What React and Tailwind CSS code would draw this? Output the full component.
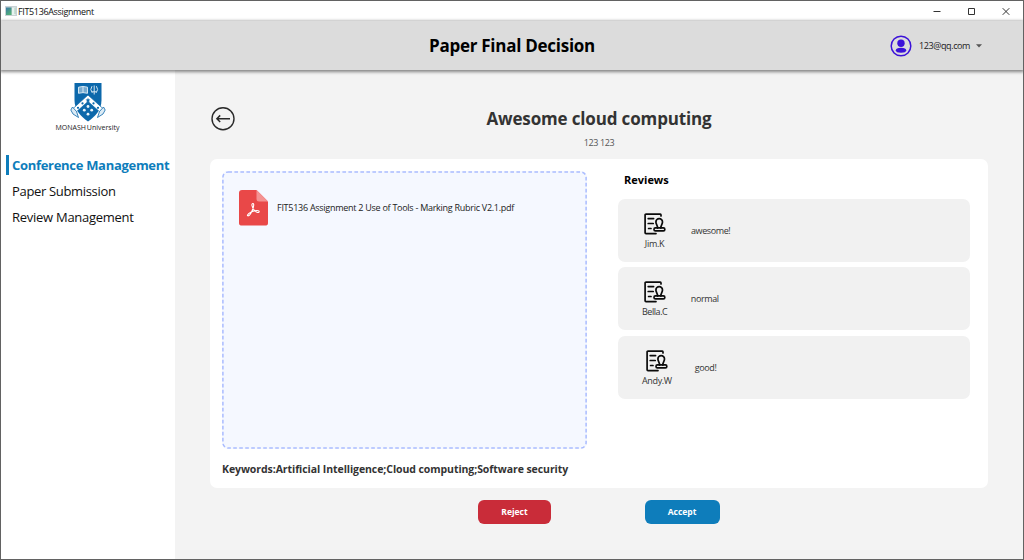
import React from "react";

function Crest() {
  return (
    <svg width="36" height="39" viewBox="0 0 36 39">
      <path d="M4.5 0H31.5V17C31.5 27 25.5 33 18 38.5C10.5 33 4.5 27 4.5 17Z" fill="#0c68ab" />
      <path d="M18 12L34 26.5L31 30L18 18.5L5 30L2 26.5Z" fill="#fff" stroke="#0c68ab" strokeWidth="0.7" />
      <path d="M2.5 24L0.8 27L3 31L8.5 34.5L6.5 28.5ZM33.5 24L35.2 27L33 31L27.5 34.5L29.5 28.5Z" fill="#dcebf5" stroke="#0c68ab" strokeWidth="0.8" />
      <path d="M8.5 4.2L13 3.4L17.5 4.2V10.3L13 9.6L8.5 10.3ZM13 3.6V9.7" fill="#79acd0" stroke="#e3f0f8" strokeWidth="0.9" />
      <path d="M22 3.2Q19.5 6.5 22.2 9.8M26.4 3.2Q28.9 6.5 26.2 9.8M24.2 2.5V11.5M22 8.8H26.4" fill="none" stroke="#d2e5f1" strokeWidth="1" />
      <path d="M18 14.8L18.7 16.4L20.4 16.6L19.1 17.8L19.5 19.4L18 18.5L16.5 19.4L16.9 17.8L15.6 16.6L17.3 16.4Z" fill="#0c68ab" />
      <g fill="#0c68ab"><circle cx="12.5" cy="20.4" r="1.1" /><circle cx="23.5" cy="20.4" r="1.1" /><circle cx="8" cy="24.8" r="1.1" /><circle cx="28" cy="24.8" r="1.1" /></g>
      <g fill="#eaf4fa"><circle cx="18" cy="23.5" r="1.4" /><circle cx="14.3" cy="27.2" r="1.4" /><circle cx="21.7" cy="27.2" r="1.4" /><circle cx="18" cy="31.2" r="1.4" /></g>
    </svg>
  );
}

function ReviewIcon() {
  return (
    <svg className="shrink-0" width="22" height="22" viewBox="0 0 22 22" fill="none" stroke="#0b0b0b" strokeWidth="1.7" strokeLinecap="round" strokeLinejoin="round">
      <path d="M17 3V1.9Q17 1.2 16.3 1.2H2Q1.1 1.2 1.1 2.1V19.7Q1.1 20.6 2 20.6H12" />
      <path d="M4.2 5.6H9.6M4.2 10.5H9.2M4.6 15.5H7" />
      <path d="M13.6 15.2C13.9 12.6 11.9 11.3 11.9 8.9A3.3 3.3 0 0 1 18.5 8.9C18.5 11.3 16.5 12.6 16.8 15.2" />
      <rect x="10" y="14.8" width="10.8" height="3" rx="1.4" />
    </svg>
  );
}

function Review({ name, text, nameClass, textClass, inset }) {
  return (
    <div className={`flex h-[63px] items-start rounded-[7px] bg-[#f1f1f1] ${inset}`}>
      <div className="flex flex-col items-center pt-[14px]">
        <ReviewIcon />
        <span className={`mt-[1px] h-[16px] text-[9px] leading-[16px] text-[#333] ${nameClass}`}>{name}</span>
      </div>
      <span className={`pt-[24px] text-[9px] leading-[16px] tracking-[-0.4px] text-[#333] ${textClass}`}>{text}</span>
    </div>
  );
}

export default function App() {
  return (
    <div className="flex h-[560px] w-[1024px] flex-col overflow-hidden whitespace-nowrap border border-[#626262] bg-[#f3f3f3] font-['Open_Sans','Noto_Sans',sans-serif] text-[#333]">
      <div className="flex h-[20px] shrink-0 items-center bg-white pl-[4px]">
        <svg width="12" height="10" viewBox="0 0 12 10">
          <defs><linearGradient id="app" x2="0.6" y2="1"><stop stopColor="#3979a5" /><stop offset="1" stopColor="#52b078" /></linearGradient></defs>
          <rect width="12" height="10" fill="#c9d2d5" />
          <rect x="1" y="1.5" width="5.5" height="7.5" fill="url(#app)" />
          <rect x="7" y="1.5" width="3.5" height="7.5" fill="#e8f3f0" />
          <rect x="9.5" y="2" width="1" height="6" fill="#a8cdbb" />
        </svg>
        <span className="ml-[1px] pt-[1px] text-[9px] leading-[18px] tracking-[-0.35px] text-[#111]">FIT5136Assignment</span>
        <svg className="ml-auto mr-[12px]" width="78" height="9" viewBox="0 0 78 9" fill="none" stroke="#333" strokeWidth="1">
          <path d="M0.5 4.5H7.5M35.5 1.5H41.5V7.5H35.5ZM69.7 1.2L76.3 7.8M76.3 1.2L69.7 7.8" />
        </svg>
      </div>
      <header className="z-10 grid h-[49px] shrink-0 grid-cols-[1fr_auto_1fr] items-center bg-[#dcdcdc] shadow-[0_1px_3px_1px_rgba(0,0,0,0.45)]">
        <span />
        <h1 className="text-[17px] font-bold leading-[24px] tracking-[-0.27px] text-black">Paper Final Decision</h1>
        <div className="flex items-center justify-end pr-[41px]">
          <svg width="22" height="22" viewBox="0 0 22 22">
            <circle cx="11" cy="11" r="9.8" fill="none" stroke="#3c12d9" strokeWidth="1.5" />
            <circle cx="11" cy="8.2" r="3.7" fill="#3c12d9" />
            <ellipse cx="11" cy="15.2" rx="5.2" ry="2.5" fill="#3c12d9" />
          </svg>
          <span className="ml-[7px] text-[9px] leading-[16px] tracking-[-0.4px] text-[#222]">123@qq.com</span>
          <svg className="ml-[6px]" width="6" height="4" viewBox="0 0 6 4"><path d="M0 0.3H6L3 3.5Z" fill="#555" /></svg>
        </div>
      </header>
      <div className="flex min-h-0 flex-1">
        <aside className="w-[174px] shrink-0 bg-white">
          <div className="flex flex-col items-center pt-[13px] pr-[1px]">
            <Crest />
            <div className="h-[12px] text-[7px] leading-[12px] text-[#222]"><span className="font-medium">MONASH</span> <span className="-ml-[1px]">University</span></div>
          </div>
          <nav className="mt-[21px] flex flex-col text-[13px] leading-[20px] text-[#111]">
            <a className="ml-[5px] h-[20px] border-l-[3px] border-[#0e7dbb] pl-[3px] font-bold tracking-[-0.3px] text-[#0e7dbb]">Conference Management</a>
            <a className="mt-[6px] h-[20px] pl-[11px] tracking-[-0.33px]">Paper Submission</a>
            <a className="mt-[6px] h-[20px] pl-[11px] tracking-[-0.27px]">Review Management</a>
          </nav>
        </aside>
        <main className="flex flex-1 flex-col pl-[35px] pr-[35px]">
          <div className="flex h-[89px] shrink-0">
            <svg className="mt-[37px] shrink-0" width="25" height="24" viewBox="0 0 25 24" fill="none" stroke="#292929" strokeWidth="1.4">
              <circle cx="13" cy="11.7" r="11" />
              <path d="M20 11.7H7M10.2 8.4L6.9 11.7L10.2 15" strokeWidth="1.5" />
            </svg>
            <div className="flex flex-1 flex-col items-center pt-[36px] pr-[25px]">
              <h2 className="text-[17px] font-bold leading-[26px] tracking-[-0.15px]">Awesome cloud computing</h2>
              <span className="mt-[3px] text-[9px] leading-[16px] tracking-[-0.4px] text-[#555]">123 123</span>
            </div>
          </div>
          <section className="flex h-[329px] w-[778px] shrink-0 rounded-[7px] bg-white">
            <div className="pl-[12px] pt-[12px]">
              <div className="relative h-[278px] w-[365px] rounded-[6px] bg-[#f5f8ff]">
                <svg className="absolute inset-0" width="365" height="278"><rect x="0.9" y="0.9" width="363.2" height="276.2" rx="5.5" fill="none" stroke="#aabcff" strokeWidth="1.5" strokeDasharray="3.6 2.4" /></svg>
                <div className="flex items-start pl-[17px] pt-[19px]">
                  <svg width="29" height="36" viewBox="0 0 29 36">
                    <path d="M3 0H17.5L29 11.5V33Q29 35.6 26 35.6H3Q0 35.6 0 33V3Q0 0 3 0Z" fill="#e94848" />
                    <path d="M17.5 0L29 11.5H20Q17.5 11.5 17.5 9Z" fill="#f49291" />
                    <path d="M14 13.5C12 13.3 13 17.5 15.2 20.2C17.5 22.8 20.2 23.2 20.2 21.5C20.2 19.8 14.7 20.6 11.8 22.2C8 24.3 7.8 26.2 9.5 25.8C11.9 25.2 16.5 13.7 14 13.5Z" fill="none" stroke="#fff" strokeWidth="1.1" />
                  </svg>
                  <span className="ml-[9px] mt-[10px] text-[9px] leading-[16px] tracking-[-0.27px] text-[#222]">FIT5136 Assignment 2 Use of Tools - Marking Rubric V2.1.pdf</span>
                </div>
              </div>
              <p className="mt-[10px] text-[10.5px] font-bold leading-[20px] tracking-[-0.07px]">Keywords:Artificial Intelligence;Cloud computing;Software security</p>
            </div>
            <div className="ml-[31px] w-[352px]">
              <h3 className="ml-[6px] mt-[11px] h-[28.5px] text-[11px] font-bold leading-[20px] text-black">Reviews</h3>
              <div className="flex flex-col gap-[5.7px]">
                <Review name="Jim.K" text="awesome!" inset="pl-[25.5px]" nameClass="tracking-[-0.3px]" textClass="ml-[25.5px]" />
                <Review name="Bella.C" text="normal" inset="pl-[24px]" nameClass="tracking-[-0.45px]" textClass="ml-[23.5px]" />
                <Review name="Andy.W" text="good!" inset="pl-[24px]" nameClass="tracking-[-0.35px]" textClass="ml-[23px]" />
              </div>
            </div>
          </section>
          <div className="mt-[12px] flex pl-[268px]">
            <button className="h-[24px] w-[73px] rounded-[6px] bg-[#c92c39] text-[8.5px] font-bold text-white">Reject</button>
            <button className="ml-[93.5px] h-[24px] w-[75px] rounded-[6px] bg-[#0e7dbb] text-[8.5px] font-bold text-white">Accept</button>
          </div>
        </main>
      </div>
    </div>
  );
}
